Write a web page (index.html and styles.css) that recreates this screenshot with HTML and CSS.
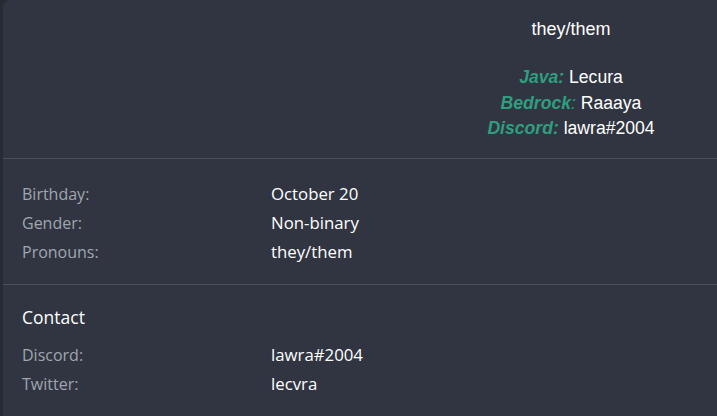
FILE: index.html
```html
<!DOCTYPE html>
<html lang="en">
<head>
    <meta charset="UTF-8">
    <meta name="viewport" content="width=device-width, initial-scale=1.0">
    <title>Profile</title>
    <link rel="stylesheet" href="styles.css">
</head>
<body>
    <div class="card">
        <div class="header">
            <div class="header-space"></div>
            <div class="header-info">
                <div class="pronouns">they/them</div>
                <div class="accounts">
                    <div><span class="tag">Java:</span> Lecura</div>
                    <div><span class="tag">Bedrock</span><span class="colon">:</span> Raaaya</div>
                    <div><span class="tag">Discord:</span> lawra#2004</div>
                </div>
            </div>
        </div>

        <div class="section">
            <div class="row">
                <div class="label">Birthday:</div>
                <div class="value">October 20</div>
            </div>
            <div class="row">
                <div class="label">Gender:</div>
                <div class="value">Non-binary</div>
            </div>
            <div class="row">
                <div class="label">Pronouns:</div>
                <div class="value">they/them</div>
            </div>
        </div>

        <div class="section contact">
            <h2>Contact</h2>
            <div class="row">
                <div class="label">Discord:</div>
                <div class="value">lawra#2004</div>
            </div>
            <div class="row">
                <div class="label">Twitter:</div>
                <div class="value">lecvra</div>
            </div>
        </div>
    </div>
</body>
</html>
```

FILE: styles.css
```css
:root {
    --card: #303541;
    --line: #4b505b;
    --green: #2f9e7f;
    --muted: #a0a5b0;
}

* {
    margin: 0;
    padding: 0;
    box-sizing: border-box;
}

body {
    background: #272b34;
    padding-left: 3px;
    overflow: hidden;
    font-family: "Open Sans", sans-serif;
}

.card {
    background: var(--card);
    border-radius: 8px 0 0 0;
    min-height: 100vh;
    width: 100%;
}

.header {
    display: flex;
    height: 159px;
    border-bottom: 1px solid var(--line);
}

.header-space {
    flex: 1;
}

.header-info {
    width: 292px;
    text-align: center;
    font-family: "Liberation Sans", Arial, sans-serif;
    font-size: 17.6px;
    color: #fff;
    padding-top: 18px;
}

.pronouns {
    font-size: 18px;
    line-height: 22px;
    margin-bottom: 25px;
}

.accounts {
    line-height: 25.5px;
}

.tag {
    color: var(--green);
    font-weight: bold;
    font-style: italic;
}

.colon {
    color: var(--green);
    font-style: italic;
}

.section {
    padding: 20px 19px 18px;
    border-bottom: 1px solid var(--line);
}

.section.contact {
    padding-top: 20px;
    border-bottom: none;
}

.row {
    display: flex;
    align-items: baseline;
    height: 29px;
    line-height: 29px;
    font-size: 16px;
}

.label {
    width: 249px;
    color: var(--muted);
}

.value {
    color: #fff;
    font-size: 16.8px;
}

h2 {
    font-size: 17.5px;
    font-weight: normal;
    color: #fff;
    line-height: 24px;
    margin-bottom: 11px;
}
```
